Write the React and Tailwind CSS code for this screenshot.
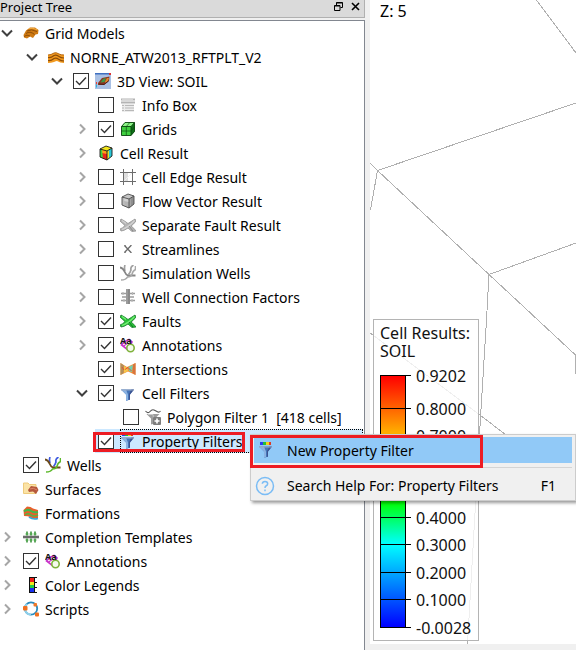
import { useId } from "react";

/* ---------- icons ---------- */

function Svg({ children }) {
  return (
    <svg viewBox="0 0 16 16" className="size-4 shrink-0" aria-hidden="true">
      {children}
    </svg>
  );
}

const GridModelsIcon = () => (
  <Svg>
    <path d="M0.500 10 L3 5.500 L7 2.500 L12 2.500 L15.500 5 L15 9 L12.500 9.500 L10 13 L7 11.500 L4 13.500 L1 12.500 Z" fill="#cf7a12" />
    <path d="M4 6 Q8 3.500 14 6.500 M3 8.500 Q7 5.500 11.500 9.500 M1 11.500 Q4 9 7 11" stroke="#8a4a05" strokeWidth="0.900" fill="none" />
    <path d="M6 3.500 Q10 2.500 14 4.800" stroke="#f3ab3f" strokeWidth="1" fill="none" />
  </Svg>
);

const CaseIcon = () => (
  <Svg>
    <path d="M0 6 Q3 6 6 4 Q8 3 11 5 Q13 6 16 6 V14 Q12 14 9 12 Q8 12 6 13 Q3 14 0 14 Z" fill="#f29a1f" />
    <path d="M0 8.500 Q3 9 6 6.500 Q8 5.500 11 7.500 Q13 9 16 9 M0 11.500 Q3 12 6 9.500 Q8 8.500 11 10.500 Q13 12 16 12" stroke="#8c4d0a" strokeWidth="1.200" fill="none" />
    <path d="M0 6 Q3 6 6 4 Q8 3 11 5 Q13 6 16 6" stroke="#b56712" strokeWidth="1" fill="none" />
  </Svg>
);

const View3dIcon = () => (
  <Svg>
    <rect width="16" height="16" fill="#a9c0e4" />
    <rect width="16" height="1.500" fill="#3f6fc0" />
    <rect x="14" width="2" height="2" fill="#d33" />
    <path d="M3 10 L7 5 L14.500 3.500 L14 8 L9 12 L3 12 Z" fill="#8a3a24" />
    <path d="M5.500 9.500 L8 6 L11 5 L9.500 9 Z" fill="#3b9a4a" />
    <path d="M10 8.500 L12 5 L14 5 L13 8 L10.500 10 Z" fill="#e0852b" />
    <path d="M4 11 L9 11.500 L13.500 8" stroke="#4a1a16" strokeWidth="0.900" fill="none" />
    <path d="M1.500 9 V11.500" stroke="#f04030" />
    <path d="M1.500 11.500 V14.500" stroke="#28b4d8" />
  </Svg>
);

const InfoBoxIcon = () => (
  <Svg>
    <path d="M1 2.500 H15 M1 5.500 H15" stroke="#b4b4b4" strokeWidth="2" />
    <rect x="2" y="7" width="12" height="8" fill="#ececec" />
    <path d="M2 8.500 H4 M5 8.500 H14 M2 11 H4 M5 11 H14 M2 13.500 H4 M5 13.500 H14" stroke="#b8b8b8" />
    <path d="M2 2.500 H13" stroke="#dcdcdc" strokeWidth="0.800" />
  </Svg>
);

const GridsIcon = () => (
  <Svg>
    <path d="M1.500 5.500 L5 1.500 H14.500 V10.500 L11 14.500 H1.500 Z" fill="#3fd03f" />
    <path d="M11 5.500 L14.500 1.500 V10.500 L11 14.500 Z" fill="#0e6e18" />
    <path d="M1.500 5.500 L5 1.500 H14.500 L11 5.500 Z" fill="#8df587" />
    <path d="M1.500 5.500 H11 V14.500 H1.500 Z M11 5.500 L14.500 1.500 H5 L1.500 5.500 M14.500 1.500 V10.500 L11 14.500" stroke="#0a420e" strokeWidth="0.900" fill="none" />
    <path d="M6.300 5.500 V14.500 M1.500 10 H11 L14.500 6 M6.300 5.500 L9.800 1.500" stroke="#0a520e" strokeWidth="0.700" fill="none" />
  </Svg>
);

function ResultCube({ gray }) {
  return (
    <Svg>
      <path d="M2 4 L8 1 L14 3 L14 11 L9 15 L2 12 Z" fill={gray ? "#c6c6c6" : "#f2e51a"} />
      <path d="M2 4 L9 6 L9 15 L2 12 Z" fill={gray ? "#d2d2d2" : "#ffa01a"} />
      <path d="M4 8 L9 9 L9 15 L4 13 Z" fill={gray ? "#b4b4b4" : "#ee2418"} />
      <path d="M2 4 L4 5 L5 13 L2 12 Z" fill={gray ? "#bcbcbc" : "#42d43a"} />
      <path d="M9 6 L14 3 L14 11 L9 15 Z" fill={gray ? "#8f8f8f" : "#29c8d8"} />
      <path d="M9 6 L11 5 L11 13 L9 15 Z" fill={gray ? "#a2a2a2" : "#f0dc22"} />
      <path d="M2 4 L8 1 L14 3 L14 11 L9 15 L2 12 Z M2 4 L9 6 L14 3 M9 6 V15" stroke={gray ? "#4c4c4c" : "#1a1a1a"} strokeWidth="0.900" fill="none" />
    </Svg>
  );
}

const EdgeIcon = () => (
  <Svg>
    <rect x="3" y="3" width="5" height="10" fill="#dedede" />
    <path d="M3.500 0 V16 M12.500 0 V16 M0 3.500 H16 M0 12.500 H16" stroke="#6c6c6c" strokeWidth="1" fill="none" />
    <path d="M4 12 L12 4" stroke="#f0f0f0" />
  </Svg>
);

function FaultIcon({ gray }) {
  return (
    <Svg>
      <path d="M1 2 Q5 4 8 6.500 Q12 4 15 2 L16 4 Q13 8 11 9 Q14 11 16 14 L12 14.500 Q9 12 8 11 Q4 14 1 14 L0 12 Q3 11 5 8.500 Q2 6 0 4 Z" fill={gray ? "#b4b4b4" : "#28c437"} stroke={gray ? "#909090" : "#16762a"} strokeWidth="0.800" />
      <path d="M2 12.500 Q9 10 14.500 3.500 M2 3.500 L6 6.500" stroke={gray ? "#d2d2d2" : "#74ec74"} strokeWidth="1.200" fill="none" />
      <path d="M9 9 L13 14" stroke={gray ? "#8a8a8a" : "#0f7a24"} strokeWidth="1" />
    </Svg>
  );
}

const StreamlinesIcon = () => (
  <Svg>
    <path d="M4.500 4.500 L11 11.500 M11 4.500 L4.500 11.500" stroke="#6a6a6a" strokeWidth="1.300" />
    <path d="M4 4.500 H6 M10 4.500 H12 M4 11.500 H6 M10 11.500 H12" stroke="#777" strokeWidth="0.700" />
  </Svg>
);

function WellsIcon({ gray }) {
  return (
    <Svg>
      <path d="M5 0 Q4 3 5 6 M13.500 0 Q10 2 11 5 Q10 8 8.500 9.500" stroke={gray ? "#a0a0a0" : "#3f5be0"} strokeWidth="1.700" fill="none" />
      <path d="M0 2.500 Q3 3 4.500 6.500 Q6 10 8 10.500 H15.500" stroke={gray ? "#858585" : "#6b4a1a"} strokeWidth="1.900" fill="none" />
      <path d="M15.500 1 V4.500 Q12.500 6 12 9.500 Q11 12 7.500 12 Q6 15 1 15" stroke={gray ? "#a8a8a8" : "#5cb82a"} strokeWidth="1.600" fill="none" />
    </Svg>
  );
}

const ConnectionIcon = () => (
  <Svg>
    <path d="M1 4.500 H15 M2 8 H14 M1 11.500 H15" stroke="#9c9c9c" strokeWidth="1.600" />
    <path d="M3 3 V6 M12.500 3 V6 M4 10 V13 M12 10 V13" stroke="#b8b8b8" strokeWidth="1.200" />
    <rect x="6" y="0" width="4" height="15" fill="#8a8a8a" />
    <path d="M7 0 V15" stroke="#b5b5b5" strokeWidth="0.800" />
  </Svg>
);

const AnnotationsIcon = () => (
  <Svg>
    <path d="M5 4.500 L9 2.500 L12 5 L8 13 L1.500 8 Z" fill="#fff" stroke="#c832c8" strokeWidth="1.600" />
    <path d="M3 9.500 L8 6" stroke="#c832c8" strokeWidth="1.200" />
    <circle cx="10.500" cy="11" r="3.700" fill="#f4faec" stroke="#7fb23c" strokeWidth="1.600" />
    <text x="0" y="7" fontSize="9" fontWeight="700" fill="#111111">Aa</text>
  </Svg>
);

const IntersectionsIcon = () => (
  <Svg>
    <path d="M0.500 2 L7 6 L15.500 2 V14 L8 10.500 L0.500 14 Z" fill="#f0913a" />
    <path d="M0.500 2 L4 4.500 L3.500 12 L0.500 14 Z" fill="#b0905c" />
    <path d="M4 5 L7.500 7 L8 10 L4 12 Z" fill="#f6c64a" />
    <path d="M8.500 6 L13 4 L12 11 L9 10 Z" fill="#6fd0b4" />
    <path d="M13 3.500 L15.500 2 V14 L12.500 12 Z" fill="#d8743c" />
    <path d="M5 8.500 L8 6.500 L11.500 10 M2 6 L4 9" stroke="#e8532c" fill="none" />
  </Svg>
);

const FunnelShape = () => (
  <>
    <path d="M1 4.500 H14 L10 9.500 V14.500 L6 16 V9.500 Z" fill="#4575b8" />
    <path d="M1 4.500 H6 L8 9.500 V15 L6 16 V9.500 Z" fill="#8ab2e2" />
    <path d="M11.500 4.500 H14 L10 9.500 V14.500 L9 15 V9 Z" fill="#3c5390" />
    <path d="M1 5 H14" stroke="#98a8c4" strokeWidth="1" />
  </>
);

const FilterIcon = () => (
  <Svg>
    <FunnelShape />
  </Svg>
);

const PropertyFilterIcon = () => (
  <Svg>
    <rect x="2" y="0" width="3" height="3" fill="#2a3ff0" />
    <rect x="5" y="0" width="3" height="3" fill="#22c03a" />
    <rect x="8" y="0" width="3" height="3" fill="#f2cf1a" />
    <rect x="11" y="0" width="2" height="3" fill="#e03a22" />
    <FunnelShape />
  </Svg>
);

const PolygonFilterIcon = () => (
  <Svg>
    <path d="M0.500 2 Q3 5 5 2.500 Q7 0 9 1 L12 2.500 Q14 4 15.500 2" fill="none" stroke="#555" strokeWidth="1.100" />
    <path d="M1.500 5 H14.500 L10 9.500 V14.500 L6 15.500 V9.500 Z" fill="#9c9c9c" />
    <path d="M3 5.500 H8 L9 14" stroke="#c8c8c8" fill="none" />
    <rect x="8" y="8" width="8" height="8" rx="1" fill="#7d7d7d" />
    <path d="M12 9.500 V14.500 M9.500 12 H14.500" stroke="#fff" strokeWidth="1.600" />
  </Svg>
);

const SurfacesIcon = () => (
  <Svg>
    <path d="M0.500 2 H5 L6.500 3.500 H13 V12.500 H0.500 Z" fill="#fbe3a6" stroke="#efcb7c" />
    <path d="M5 9 L8 5 L14 6 L15.500 9 L13 13 L10 10.500 L6 11 Z" fill="#b5583c" />
    <path d="M7 8 Q10 6 14 9" stroke="#dd8468" fill="none" />
  </Svg>
);

const FormationsIcon = () => (
  <Svg>
    <path d="M0.500 5 L4 1.500 Q8 1.500 10 3.500 L15 5 V13 Q10 15 7 12 Q5 11 1 11 Z" fill="#e8602c" />
    <path d="M1 6.500 Q5 3.500 8 6 Q11 8 15 7" stroke="#42b84a" strokeWidth="2" fill="none" />
    <path d="M2 10 Q5 7.500 8 10 Q11 12 15 10" stroke="#5bb044" strokeWidth="1.600" fill="none" />
    <path d="M6 12 Q10 15 15 13.500" stroke="#35a8dc" strokeWidth="1.600" fill="none" />
  </Svg>
);

const CompletionIcon = () => (
  <Svg>
    <path d="M0 8 H16" stroke="#6b6b6b" strokeWidth="2.600" />
    <path d="M4 2.500 V6.500 M8 2.500 V6.500 M12 2.500 V6.500 M4 9.500 V13.500 M8 9.500 V13.500 M12 9.500 V13.500" stroke="#2f8c2f" strokeWidth="1.500" />
    <path d="M2.500 5 H5.500 M6.500 5 H9.500 M10.500 5 H13.500 M2.500 11 H5.500 M6.500 11 H9.500 M10.500 11 H13.500" stroke="#49a845" strokeWidth="1.200" />
  </Svg>
);

const LegendsIcon = () => (
  <Svg>
    <rect x="6" y="0" width="6" height="16" fill="#111" />
    <rect x="7" y="1" width="4" height="4" fill="#f02018" />
    <rect x="7" y="5" width="4" height="3" fill="#f4e71c" />
    <rect x="7" y="8" width="4" height="3" fill="#20d048" />
    <rect x="7" y="11" width="4" height="4" fill="#1830f0" />
    <path d="M12 0.500 H14 M12 5.500 H14 M12 10.500 H14 M12 15.500 H14" stroke="#111" />
  </Svg>
);

const ScriptsIcon = () => (
  <Svg>
    <circle cx="8" cy="7.500" r="6.200" fill="none" stroke="#2a8cc0" strokeWidth="1.800" />
    <path d="M4 3 A6.200 6.200 0 0 0 8 13.700" fill="none" stroke="#8fd0ea" strokeWidth="2" />
    <rect x="0" y="5" width="4.500" height="4.500" rx="1" fill="#f07020" />
    <rect x="10.500" y="2" width="3.500" height="3.500" rx="1" fill="#f07828" />
    <rect x="12" y="11.500" width="4" height="4" rx="1" fill="#f07020" />
  </Svg>
);

/* ---------- project tree ---------- */

const TREE = [
  {
    label: "Grid Models", icon: <GridModelsIcon />, open: true, children: [
      {
        label: "NORNE_ATW2013_RFTPLT_V2", icon: <CaseIcon />, open: true, children: [
          {
            label: "3D View: SOIL", icon: <View3dIcon />, checked: true, open: true, children: [
              { label: "Info Box", icon: <InfoBoxIcon />, checked: false },
              { label: "Grids", icon: <GridsIcon />, checked: true, open: false },
              { label: "Cell Result", icon: <ResultCube />, open: false },
              { label: "Cell Edge Result", icon: <EdgeIcon />, checked: false, open: false },
              { label: "Flow Vector Result", icon: <ResultCube gray />, checked: false, open: false },
              { label: "Separate Fault Result", icon: <FaultIcon gray />, checked: false, open: false },
              { label: "Streamlines", icon: <StreamlinesIcon />, checked: false, open: false },
              { label: "Simulation Wells", icon: <WellsIcon gray />, checked: false, open: false },
              { label: "Well Connection Factors", icon: <ConnectionIcon />, checked: false, open: false },
              { label: "Faults", icon: <FaultIcon />, checked: true, open: false },
              { label: "Annotations", icon: <AnnotationsIcon />, checked: true, open: false },
              { label: "Intersections", icon: <IntersectionsIcon />, checked: true },
              {
                label: "Cell Filters", icon: <FilterIcon />, checked: true, open: true, children: [
                  { label: "Polygon Filter 1  [418 cells]", icon: <PolygonFilterIcon />, checked: false },
                ],
              },
              { label: "Property Filters", icon: <PropertyFilterIcon />, checked: true, selected: true },
            ],
          },
        ],
      },
    ],
  },
  { label: "Wells", icon: <WellsIcon />, checked: true },
  { label: "Surfaces", icon: <SurfacesIcon /> },
  { label: "Formations", icon: <FormationsIcon /> },
  { label: "Completion Templates", icon: <CompletionIcon />, open: false },
  { label: "Annotations", icon: <AnnotationsIcon />, checked: true, open: false },
  { label: "Color Legends", icon: <LegendsIcon />, open: false },
  { label: "Scripts", icon: <ScriptsIcon />, open: false },
];

function Toggle({ open, label }) {
  return (
    <button type="button" aria-label={label} aria-expanded={open} className="flex h-6 w-5 shrink-0 items-center">
      <svg viewBox="0 0 14 14" className="h-3.5 w-3.5" fill="none" strokeWidth="2" aria-hidden="true">
        {open ? <path d="M2 4.500 L7 9.500 L12 4.500" stroke="#404040" /> : <path d="M5 2.500 L9.500 7 L5 11.500" stroke="#a6a6a6" />}
      </svg>
    </button>
  );
}

function Check({ id, checked }) {
  return (
    <span className="mr-1.5 grid size-4 shrink-0">
      <input
        id={id}
        type="checkbox"
        defaultChecked={checked}
        className="peer col-start-1 row-start-1 size-4 appearance-none border border-[#333333] bg-white"
      />
      <svg viewBox="0 0 16 16" className="pointer-events-none invisible col-start-1 row-start-1 size-4 peer-checked:visible" aria-hidden="true">
        <path d="M3 8 L6.500 11.500 L13 4.500" fill="none" stroke="#333333" strokeWidth="1.400" />
      </svg>
    </span>
  );
}

function TreeNode({ node }) {
  const id = useId();
  const hasCheck = node.checked !== undefined;
  const Text = hasCheck ? "label" : "span";
  return (
    <li>
      <div className="flex h-6 items-center">
        {node.open === undefined ? <span className="w-5 shrink-0" /> : <Toggle open={node.open} label={node.label} />}
        <div className={node.selected ? "relative flex h-6 flex-1 items-center bg-[#cce8ff] pl-[3px]" : "flex h-6 flex-1 items-center pl-[3px]"}>
          {hasCheck && <Check id={id} checked={node.checked} />}
          <div className={node.selected ? "flex h-6 flex-1 items-center gap-1.5 outline-1 -outline-offset-1 outline-dotted outline-black" : "flex h-6 flex-1 items-center gap-1.5"}>
            {node.icon}
            <Text htmlFor={hasCheck ? id : undefined} className="pt-0.5 whitespace-pre">{node.label}</Text>
          </div>
          {node.selected && <span className="pointer-events-none absolute -left-0.5 top-[3px] h-5 w-[152px] border-3 border-[#ed1c24]" />}
        </div>
      </div>
      {node.children && (
        <ul className="pl-[25px]">
          {node.children.map((c) => <TreeNode key={c.label} node={c} />)}
        </ul>
      )}
    </li>
  );
}

function ProjectTree() {
  return (
    <aside className="flex w-[365px] shrink-0 flex-col">
      <header className="flex h-[18px] items-center border-r border-b border-[#b0b0b0] bg-[#dadada] pr-1 pb-1">
        <h1 className="flex-1 text-[13px] leading-4">Project Tree</h1>
        <button type="button" aria-label="Float" className="mr-2">
          <svg viewBox="0 0 9 9" className="size-[9px]" fill="none" stroke="#000" aria-hidden="true">
            <path d="M2.500 3 V0.500 H8.500 V5.500 H6.500 M2.500 1 H8.500" />
            <path d="M0.500 3.500 H6 V8.500 H0.500 Z M0.500 4 H6" />
          </svg>
        </button>
        <button type="button" aria-label="Close">
          <svg viewBox="0 0 9 9" className="size-[9px]" stroke="#000" strokeWidth="1.600" aria-hidden="true">
            <path d="M1 1 L8 8 M8 1 L1 8" />
          </svg>
        </button>
      </header>
      <ul className="mt-0.5 flex-1 border-t border-r border-[#828790] bg-white pr-px text-sm">
        {TREE.map((n) => <TreeNode key={n.label} node={n} />)}
      </ul>
    </aside>
  );
}

/* ---------- 3D view ---------- */

// The ticks without a label lie under the open menu.
const TICKS = [
  { at: 0.9202, label: "0.9202", row: "h-[33px]" },
  { at: 0.8, label: "0.8000", row: "h-[27px]" },
  { at: 0.7, label: "0.7000", row: "h-[27px]" },
  { at: 0.6, row: "h-[28px]" },
  { at: 0.5, row: "h-[27px]" },
  { at: 0.4, label: "0.4000", row: "h-[27px]" },
  { at: 0.3, label: "0.3000", row: "h-[28px]" },
  { at: 0.2, label: "0.2000", row: "h-[27px]" },
  { at: 0.1, label: "0.1000", row: "h-[28px]" },
  { at: -0.0028, label: "-0.0028", row: "h-px" },
];

function Legend() {
  return (
    <section className="absolute bottom-[3px] left-[3px] w-[106px] border border-[#b4b4b4] bg-white/80 px-1.5 pt-1 pb-3 text-base leading-[18px] text-[#111111]">
      <h2>Cell Results:<br />SOIL</h2>
      <div className="mt-[15px] grid">
        <div className="col-start-1 row-start-1 w-[26px] border border-black bg-[linear-gradient(#ff0000,#ffff00_33%,#00ff00_50%,#00ffff_67%,#0000ff)]" />
        <ul className="col-start-1 row-start-1">
          {TICKS.map((t) => (
            <li key={t.at} className={t.row}>
              <div className="flex h-px items-center gap-[5px]">
                <span className="h-px w-[31px] shrink-0 bg-black" />
                {t.label && <span>{t.label}</span>}
              </div>
            </li>
          ))}
        </ul>
      </div>
    </section>
  );
}

function View() {
  return (
    <main className="relative mb-1.5 flex-1 overflow-hidden bg-white">
      <svg width="206" height="644" className="absolute top-0 left-0" fill="none" stroke="#b0b0b0" shapeRendering="crispEdges" aria-hidden="true">
        <path d="M166.500 0 L206 53" />
        <path d="M0 163 L7.500 170.500 L206 103" />
        <path d="M7.500 170.500 L0.500 210" />
        <path d="M7.500 170.500 L119 274.500 L206 243" />
        <path d="M119 274.500 L205.500 355 V374" />
        <path d="M119 274.500 L116.500 320 L109.500 434 L97.500 644" />
        <path d="M0 333 L110 415 L136 435" />
      </svg>
      <p className="relative px-2.5 text-base leading-[22px]">Z: 5</p>
      <Legend />
    </main>
  );
}

/* ---------- context menu ---------- */

function ContextMenu() {
  return (
    <div role="menu" className="absolute top-[434px] left-[250px] w-[326px] border border-[#cccccc] bg-[#f0f0f0] px-[3px] pt-0.5 pb-px text-sm shadow-[2px_2px_3px_rgba(0,0,0,0.4)]">
      <button type="button" role="menuitem" className="flex h-[26px] w-full items-center bg-[#91c9f7] pl-0.5 text-left">
        <span className="flex w-[31px] pl-0.5"><PropertyFilterIcon /></span>
        <span className="pt-0.5">New Property Filter</span>
      </button>
      <hr className="mt-1 ml-8 border-[#d4d4d4]" />
      <button type="button" role="menuitem" className="mt-1 flex h-[27px] w-full items-center pr-4 pl-px text-left">
        <span className="w-8">
          <svg viewBox="0 0 20 20" className="size-5" fill="none" stroke="#7abcf5" strokeWidth="1.500" aria-hidden="true">
            <circle cx="10" cy="10" r="8.500" />
            <path d="M7.300 7.800 Q7.500 5.500 10 5.500 Q12.700 5.500 12.700 7.800 Q12.700 9.200 11 10 Q10 10.600 10 12 M10 13.500 V15.200" />
          </svg>
        </span>
        <span className="flex-1">Search Help For: Property Filters</span>
        <kbd className="font-[inherit]">F1</kbd>
      </button>
      <span className="pointer-events-none absolute top-0 -left-px h-[33px] w-[233px] border-3 border-[#ed1c24]" />
    </div>
  );
}

export default function App() {
  return (
    <div className="relative min-h-screen overflow-hidden bg-white pb-[3px] font-['Noto_Sans','Open_Sans',sans-serif] text-black">
      <div className="flex min-h-[calc(100vh-3px)] gap-[5px] bg-[#f0f0f0]">
        <ProjectTree />
        <View />
      </div>
      <ContextMenu />
    </div>
  );
}
